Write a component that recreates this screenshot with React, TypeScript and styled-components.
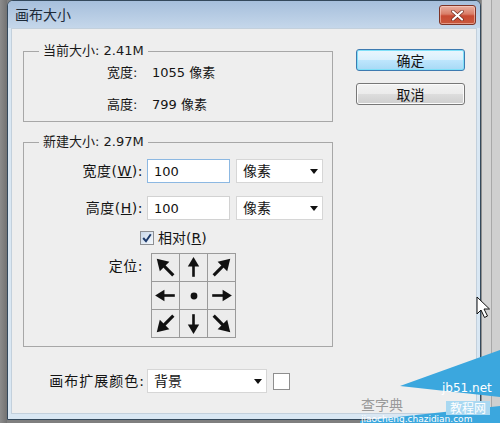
import React from "react";
import styled, { createGlobalStyle } from "styled-components";

const Global = createGlobalStyle`
  html, body { margin: 0; padding: 0; background: #7f7f7f; }
  body {
    font-family: "DejaVu Sans", "Noto Sans CJK SC", sans-serif;
    font-size: 13px;
    line-height: 16px;
    color: #141414;
  }
`;

const Screen = styled.div`
  position: relative;
  display: flex;
  width: 500px;
  height: 423px;
  overflow: hidden;
  background: #7f7f7f;
`;

const LeftStrip = styled.div`
  flex: none;
  width: 7px;
  background: linear-gradient(90deg, #8c8c8c, #727272);
`;

const RightStrip = styled.div`
  flex: 1;
  background: linear-gradient(90deg, #d4d4d4 0 9px, #a8a8a8 9px 10px, #cfcfcf 10px);
  border-left: 1px solid #8f8f8f;
`;

const Window = styled.div`
  flex: none;
  width: 474px;
  height: 420px;
  box-sizing: border-box;
  border: 1px solid #34495c;
  border-radius: 6px 6px 0 0;
  background: #d9e7f3;
  display: flex;
  flex-direction: column;
`;

const TitleBar = styled.div`
  flex: none;
  height: 27px;
  display: flex;
  align-items: flex-start;
  justify-content: space-between;
  padding: 0 4px 0 7px;
  border-radius: 5px 5px 0 0;
  background: linear-gradient(#a6bfdc, #c5d7ea);
`;

const Title = styled.span`
  margin-top: 5px;
  font-family: "Noto Sans CJK SC", sans-serif;
  font-size: 14px;
  line-height: 17px;
  color: #1d2a38;
`;

const CloseButton = styled.div`
  margin-top: 4px;
  width: 37px;
  height: 20px;
  box-sizing: border-box;
  display: flex;
  align-items: center;
  justify-content: center;
  border: 1px solid #7e3426;
  border-radius: 3px;
  background: linear-gradient(#eab0a1 0%, #d97d67 45%, #c84a32 55%, #c9583d 100%);
  box-shadow: inset 0 0 0 1px rgba(255, 220, 210, 0.5);
`;

const Frame = styled.div`
  flex: 1;
  display: flex;
  padding: 0 3px 5px 3px;
`;

const Body = styled.div`
  flex: 1;
  display: flex;
  align-items: flex-start;
  padding: 14px 0 0 11px;
  background: #eeeeee;
  border: 1px solid #c3d0dc;
`;

const MainCol = styled.div`
  flex: none;
  width: 310px;
  display: flex;
  flex-direction: column;
`;

const ButtonCol = styled.div`
  flex: none;
  margin: 6px 0 0 23px;
  display: flex;
  flex-direction: column;
  gap: 12px;
`;

const Button = styled.button<{ $default?: boolean }>`
  width: 109px;
  height: 22px;
  box-sizing: border-box;
  padding: 0;
  font-family: "Noto Sans CJK SC", sans-serif;
  font-size: 14px;
  line-height: 16px;
  color: #141414;
  border-radius: 3px;
  border: 1px solid ${(p) => (p.$default ? "#3d7ab0" : "#777777")};
  background: ${(p) =>
    p.$default
      ? "linear-gradient(#eaf6fd 0%, #d9f0fc 50%, #bee6fd 50%, #a7d9f5 100%)"
      : "linear-gradient(#f2f2f2 0%, #ebebeb 50%, #dddddd 50%, #cfcfcf 100%)"};
  box-shadow: inset 0 0 0 1px ${(p) => (p.$default ? "#7fe0f8" : "#fbfbfb")};
`;

const Group = styled.fieldset<{ $pad: string; $mt?: number }>`
  margin: ${(p) => p.$mt ?? 0}px 0 0 0;
  padding: ${(p) => p.$pad};
  border: 1px solid #a7a7a7;
  min-width: 0;
`;

const Legend = styled.legend`
  margin-left: 15px;
  padding: 0 4px;
  font-size: 13px;
  line-height: 16px;
  color: #1a1a1a;
`;

const InfoList = styled.div`
  display: flex;
  flex-direction: column;
  gap: 16px;
  padding-left: 83px;
`;

const InfoRow = styled.div`
  display: flex;
  align-items: center;
  height: 16px;
`;

const Key = styled.span`
  width: 45px;
  flex: none;
`;

const FieldRow = styled.div<{ $mt?: number }>`
  display: flex;
  align-items: center;
  height: 24px;
  margin-top: ${(p) => p.$mt ?? 0}px;
`;

const Label = styled.span<{ $w?: number; $ls?: number }>`
  flex: none;
  width: ${(p) => p.$w ?? 119}px;
  text-align: right;
  white-space: nowrap;
  font-size: 14px;
  letter-spacing: ${(p) => p.$ls ?? 0.5}px;
`;

const U = styled.span`
  text-decoration: underline;
`;

const Input = styled.input<{ $focus?: boolean }>`
  flex: none;
  margin-left: 4px;
  width: 83px;
  height: 24px;
  box-sizing: border-box;
  padding: 0 0 0 6px;
  font-family: "DejaVu Sans", sans-serif;
  font-size: 13px;
  color: #111;
  background: #fff;
  border: 1px solid ${(p) => (p.$focus ? "#8cb8e2" : "#d2d2d2")};
  outline: none;
`;

const Select = styled.div<{ $w: number; $ml: number }>`
  flex: none;
  margin-left: ${(p) => p.$ml}px;
  width: ${(p) => p.$w}px;
  height: 24px;
  box-sizing: border-box;
  display: flex;
  align-items: center;
  justify-content: space-between;
  padding: 0 4px 0 6px;
  background: #fff;
  border: 1px solid #d6d6d6;
  font-size: 14px;
`;

const Caret = styled.span`
  width: 0;
  height: 0;
  border-left: 4px solid transparent;
  border-right: 4px solid transparent;
  border-top: 5px solid #111;
`;

const CheckRow = styled.label`
  display: flex;
  align-items: center;
  height: 16px;
  margin-top: 10px;
  padding-left: 116px;
  gap: 4px;
  font-size: 14px;
`;

const CheckBox = styled.span`
  width: 14px;
  height: 14px;
  box-sizing: border-box;
  display: flex;
  align-items: center;
  justify-content: center;
  border: 1px solid #8d8f93;
  background: linear-gradient(135deg, #c9d8ea, #f4f8fc);
`;

const AnchorRow = styled.div`
  display: flex;
  align-items: flex-start;
  margin-top: 7px;
`;

const AnchorLabel = styled(Label)`
  margin-top: 5px;
`;

const AnchorGrid = styled.div`
  margin-left: 8px;
  display: grid;
  grid-template-columns: repeat(3, 27px);
  grid-template-rows: repeat(3, 27px);
  gap: 1px;
  padding: 1px;
  background: #9a9a9a;
`;

const Cell = styled.div`
  display: flex;
  align-items: center;
  justify-content: center;
  background: #ececec;
`;

const BottomRow = styled.div`
  display: flex;
  align-items: center;
  height: 24px;
  margin-top: 22px;
`;

const Swatch = styled.span`
  margin-left: 6px;
  width: 17px;
  height: 17px;
  box-sizing: border-box;
  background: #fff;
  border: 1px solid #8e8e8e;
`;

const Watermark = styled.svg`
  position: absolute;
  left: 360px;
  top: 348px;
`;

const Cursor = styled.svg`
  position: absolute;
  left: 476px;
  top: 296px;
`;

const Arrow: React.FC<{ angle: number }> = ({ angle }) => {
  const diag = angle % 90 !== 0;
  const s = diag ? 1.25 : 1.05;
  return (
    <svg width="25" height="25" viewBox="0 0 24 24">
      <g transform={`rotate(${angle} 12 12) translate(12 12) scale(${s}) translate(-12 -12)`}>
        <polygon points="12,2.5 6.8,11 17.2,11" fill="#111" />
        <line x1="12" y1="10" x2="12" y2="20.5" stroke="#111" strokeWidth="2.4" />
      </g>
    </svg>
  );
};

const Dot = () => (
  <svg width="10" height="10" viewBox="0 0 10 10">
    <circle cx="5" cy="5" r="3.4" fill="#111" />
  </svg>
);

const anchors: (number | null)[] = [-45, 0, 45, -90, null, 90, -135, 180, 135];

export default function App() {
  return (
    <>
      <Global />
      <Screen>
        <LeftStrip />
        <Window>
          <TitleBar>
            <Title>画布大小</Title>
            <CloseButton>
              <svg width="13" height="11" viewBox="0 0 13 11">
                <path d="M2 1.5 L11 9.5 M11 1.5 L2 9.5" stroke="#6a2418" strokeWidth="3.4" strokeLinecap="round" />
                <path d="M2 1.5 L11 9.5 M11 1.5 L2 9.5" stroke="#ffffff" strokeWidth="2.2" strokeLinecap="round" />
              </svg>
            </CloseButton>
          </TitleBar>
          <Frame>
            <Body>
              <MainCol>
                <Group $pad="6px 0 8px 0">
                  <Legend>当前大小: 2.41M</Legend>
                  <InfoList>
                    <InfoRow>
                      <Key>宽度:</Key>
                      <span>1055 像素</span>
                    </InfoRow>
                    <InfoRow>
                      <Key>高度:</Key>
                      <span>799 像素</span>
                    </InfoRow>
                  </InfoList>
                </Group>
                <Group $pad="9px 0 8px 0" $mt={12}>
                  <Legend>新建大小: 2.97M</Legend>
                  <FieldRow>
                    <Label>
                      宽度(<U>W</U>):
                    </Label>
                    <Input $focus readOnly value="100" />
                    <Select $w={87} $ml={6}>
                      <span>像素</span>
                      <Caret />
                    </Select>
                  </FieldRow>
                  <FieldRow $mt={13}>
                    <Label>
                      高度(<U>H</U>):
                    </Label>
                    <Input readOnly value="100" />
                    <Select $w={87} $ml={6}>
                      <span>像素</span>
                      <Caret />
                    </Select>
                  </FieldRow>
                  <CheckRow>
                    <CheckBox>
                      <svg width="10" height="10" viewBox="0 0 10 10">
                        <path d="M1.2 5 L4 8.2 L8.8 1.3" fill="none" stroke="#1d3a6b" strokeWidth="2" />
                      </svg>
                    </CheckBox>
                    <span>
                      相对(<U>R</U>)
                    </span>
                  </CheckRow>
                  <AnchorRow>
                    <AnchorLabel>定位:</AnchorLabel>
                    <AnchorGrid>
                      {anchors.map((a, i) => (
                        <Cell key={i}>{a === null ? <Dot /> : <Arrow angle={a} />}</Cell>
                      ))}
                    </AnchorGrid>
                  </AnchorRow>
                </Group>
                <BottomRow>
                  <Label $w={122} $ls={1}>画布扩展颜色:</Label>
                  <Select $w={120} $ml={2}>
                    <span>背景</span>
                    <Caret />
                  </Select>
                  <Swatch />
                </BottomRow>
              </MainCol>
              <ButtonCol>
                <Button $default>确定</Button>
                <Button>取消</Button>
              </ButtonCol>
            </Body>
          </Frame>
        </Window>
        <RightStrip />
        <Watermark width="140" height="75" viewBox="0 0 140 75">
          <polygon points="40,38 140,2 140,49" fill="#3ba7de" />
          <polygon points="0,75 0,73 140,58 140,75" fill="#3ba7de" />
          <rect x="86" y="53" width="44" height="14" fill="#a9d8f1" />
          <text x="82" y="44" fill="#ffffff" fontSize="12" fontFamily="DejaVu Sans, sans-serif">jb51.net</text>
          <text x="1" y="62" fill="#9a9a9a" fontSize="14" fontFamily="Noto Sans CJK SC, sans-serif">查字典</text>
          <text x="90" y="65" fill="#ffffff" fontSize="12" fontFamily="Noto Sans CJK SC, sans-serif">教程网</text>
          <text x="1" y="74" fill="#ffffff" fontSize="9" fontFamily="DejaVu Sans, sans-serif">jiaocheng.chazidian.com</text>
        </Watermark>
        <Cursor width="16" height="24" viewBox="0 0 16 24">
          <path d="M1 1 L1 18 L5 14 L8.5 21.5 L11.5 20 L8 13 L13.5 13 Z" fill="#fff" stroke="#111" strokeWidth="1" />
        </Cursor>
      </Screen>
    </>
  );
}
